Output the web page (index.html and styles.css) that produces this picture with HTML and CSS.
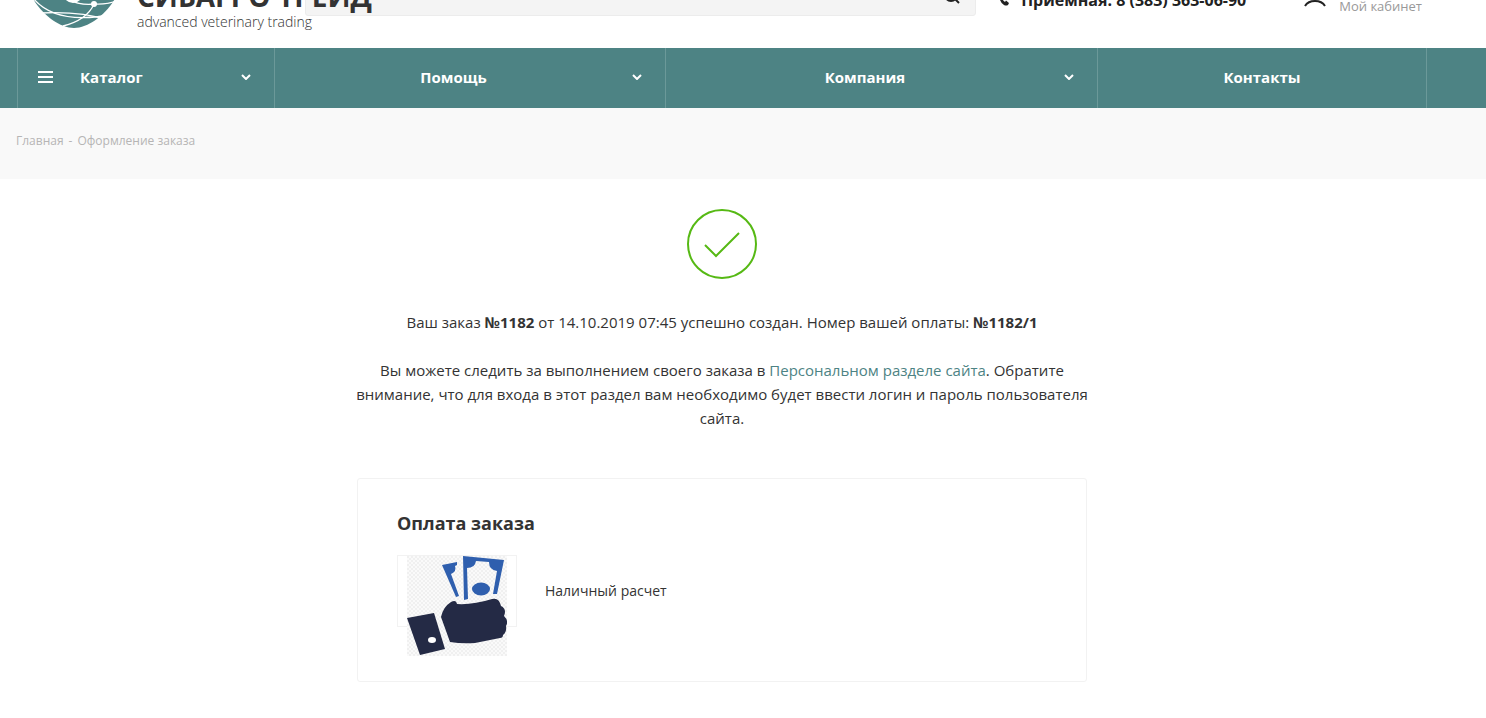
FILE: index.html
```html
<!DOCTYPE html>
<html lang="ru">
<head>
  <meta charset="UTF-8">
  <meta name="viewport" content="width=device-width, initial-scale=1.0">
  <title>Оформление заказа</title>
  <link rel="stylesheet" href="styles.css">
</head>
<body>

  <header class="header">
    <a href="#" class="logo">
      <svg class="logo-icon" width="100" height="100" viewBox="0 0 100 100" aria-hidden="true">
        <path d="M44 0C70 0 92 18 92 48C91 74 64 100 44 100C24 100 -3 74 -4 48C-4 18 18 0 44 0Z" fill="#4d8384"/>
        <g fill="none" stroke="#fff" stroke-width="1.3">
          <path d="M3 70Q26 98 84 86"/>
          <path d="M11 85Q50 83 78 92"/>
          <path d="M64 76Q57 92 33 98"/>
          <path d="M28 66Q45 78 64 76Q76 77 90 72"/>
        </g>
        <circle cx="43" cy="65" r="10" fill="#fff"/>
        <circle cx="43" cy="64" r="5" fill="#4d8384"/>
        <circle cx="64" cy="76" r="3" fill="#fff"/>
      </svg>
      <span class="logo-text">
        <span class="logo-name">СИБАГРО ТРЕЙД</span>
        <span class="logo-slogan">advanced veterinary trading</span>
      </span>
    </a>

    <form class="search" onsubmit="return false;">
      <input type="text" class="search-input" aria-label="Поиск">
      <button type="submit" class="search-button" aria-label="Найти">
        <svg width="18" height="18" viewBox="0 0 18 18" fill="none" stroke="#222" stroke-width="2">
          <circle cx="8" cy="8" r="6"/>
          <path d="M12 12L16 16"/>
        </svg>
      </button>
    </form>

    <a href="tel:83833630690" class="phone">
      <svg width="14" height="14" viewBox="0 0 14 14" aria-hidden="true">
        <path d="M3 1L5 0L7 4L5 5Q5 8 8 10L9 8.500L12 11L11 13Q9 14 7 13Q1 9 3 1Z" fill="#222"/>
      </svg>
      <span>Приемная: 8 (383) 363-06-90</span>
    </a>

    <a href="#" class="cabinet">
      <svg width="22" height="22" viewBox="0 0 22 22" fill="none" stroke="#222" stroke-width="2" aria-hidden="true">
        <circle cx="11" cy="7" r="5"/>
        <path d="M1 21Q4 16 11 16Q18 16 21 21"/>
      </svg>
      <span>Мой кабинет</span>
    </a>
  </header>

  <!-- Main menu -->
  <nav class="menu">
    <ul class="menu-list">
      <li class="menu-item">
        <a href="#" class="menu-link catalog">
          <svg width="15" height="12" viewBox="0 0 15 12" fill="#fff" aria-hidden="true">
            <path d="M0 0H15V2H0ZM0 5H15V7H0ZM0 10H15V12H0Z"/>
          </svg>
          <span>Каталог</span>
          <svg class="arrow" width="10" height="6" viewBox="0 0 10 6" aria-hidden="true"><path d="M1 1L5 5L9 1"/></svg>
        </a>
      </li>
      <li class="menu-item">
        <a href="#" class="menu-link">
          <span class="menu-title">Помощь</span>
          <svg class="arrow" width="10" height="6" viewBox="0 0 10 6" aria-hidden="true"><path d="M1 1L5 5L9 1"/></svg>
        </a>
      </li>
      <li class="menu-item">
        <a href="#" class="menu-link">
          <span class="menu-title">Компания</span>
          <svg class="arrow" width="10" height="6" viewBox="0 0 10 6" aria-hidden="true"><path d="M1 1L5 5L9 1"/></svg>
        </a>
      </li>
      <li class="menu-item">
        <a href="#" class="menu-link single">
          <span class="menu-title">Контакты</span>
        </a>
      </li>
    </ul>
  </nav>

  <!-- Breadcrumbs -->
  <div class="breadcrumbs">
    <a href="#">Главная</a>
    <span>-</span>
    <span>Оформление заказа</span>
  </div>

  <main class="content">
    <div class="order">
      <svg class="order-check" width="70" height="70" viewBox="0 0 70 70" fill="none" stroke="#56b914" stroke-width="2" aria-hidden="true">
        <circle cx="35" cy="35" r="34"/>
        <path d="M18 36L29 47L52 24"/>
      </svg>

      <p>Ваш заказ <b>№1182</b> от 14.10.2019 07:45 успешно создан. Номер вашей оплаты: <b>№1182/1</b></p>
      <p>Вы можете следить за выполнением своего заказа в <a href="#">Персональном разделе сайта</a>. Обратите внимание, что для входа в этот раздел вам необходимо будет ввести логин и пароль пользователя сайта.</p>

      <section class="payment">
        <h3>Оплата заказа</h3>
        <div class="payment-row">
          <div class="payment-logo">
            <svg width="100" height="100" viewBox="0 0 100 100" aria-hidden="true">
              <defs>
                <pattern id="checks" width="4" height="4" patternUnits="userSpaceOnUse">
                  <rect width="4" height="4" fill="#fafafa"/>
                  <rect width="2" height="2" fill="#f0f0f0"/>
                  <rect x="2" y="2" width="2" height="2" fill="#f0f0f0"/>
                </pattern>
              </defs>
              <rect width="100" height="100" fill="url(#checks)"/>
              <g fill="#2f5fae">
                <path d="M35 9L50 6L50 9L48 10Q50 15 44 18L52 40L49 41Z"/>
                <path fill-rule="evenodd" d="M56 0L97 4L90 38L86 38L90 15Q82 14 82 6L69 5Q68 12 60 12L61 43L57 44Z"/>
                <ellipse cx="74" cy="33" rx="9" ry="6.500"/>
              </g>
              <g fill="#242a45">
                <path d="M0 62L27 57L38 93L13 99Z"/>
                <path d="M34 61Q36 51 44 46Q49 43 50 48Q66 49 85 43Q92 41 94 50Q100 53 97 60Q102 65 99 70Q100 76 96 79Q96 82 93 82L68 87Q55 88 43 86Z"/>
              </g>
              <ellipse cx="25" cy="84" rx="4" ry="3" fill="#fff"/>
            </svg>
          </div>
          <div class="payment-name">Наличный расчет</div>
        </div>
      </section>
    </div>
  </main>

</body>
</html>
```
FILE: styles.css
```css
* {
  box-sizing: border-box;
}

body {
  margin: 0;
  font-family: "Open Sans", Arial, sans-serif;
  font-size: 15px;
  line-height: 24px;
  color: #333;
  background-color: #fff;
}

a {
  color: #4d8384;
  text-decoration: none;
}

/* Header */
.header {
  display: flex;
  align-items: flex-end;
  height: 48px;
  padding: 0 64px 0 30px;
  overflow: hidden;
}

.logo {
  display: flex;
  align-items: flex-end;
  flex: 0 0 275px;
  min-width: 0;
  padding-bottom: 16px;
  color: #333;
  z-index: 1;
}

.logo-icon {
  flex: none;
  margin-bottom: 4px;
}

.logo-text {
  display: flex;
  flex-direction: column;
  margin-left: 7px;
  white-space: nowrap;
}

.logo-name {
  font-size: 28px;
  font-weight: 700;
  line-height: 32px;
}

.logo-slogan {
  font-size: 14px;
  font-weight: 300;
  line-height: 20px;
}

.search {
  display: flex;
  flex: 1;
  margin-bottom: 32px;
  height: 40px;
  background-color: #f4f4f4;
  border: 1px solid #ececec;
  border-radius: 3px;
}

.search-input {
  flex: 1;
  min-width: 0;
  border: none;
  background: transparent;
}

.search-button {
  width: 46px;
  padding: 2px 0 0;
  border: none;
  background: transparent;
}

.phone {
  display: flex;
  align-items: flex-end;
  gap: 10px;
  margin: 0 58px 38px 21px;
  font-size: 16px;
  font-weight: 700;
  line-height: 20px;
  color: #222;
  white-space: nowrap;
}

.phone svg {
  margin-bottom: 4px;
}

.cabinet {
  display: flex;
  align-items: flex-end;
  gap: 13px;
  padding-bottom: 32px;
  font-size: 13px;
  line-height: 20px;
  color: #999;
  white-space: nowrap;
}

.cabinet svg {
  margin-bottom: 9px;
}

/* Main menu */
.menu {
  padding: 0 59px 0 17px;
  background-color: #4d8384;
}

.menu-list {
  display: grid;
  grid-template-columns: 257fr 391fr 432fr 329fr;
  margin: 0;
  padding: 0;
  list-style: none;
  border-left: 1px solid #6b9999;
}

.menu-item {
  border-right: 1px solid #6b9999;
}

.menu-link {
  display: flex;
  align-items: center;
  height: 60px;
  padding: 0 23px 2px 0;
  font-weight: 700;
  color: #fff;
}

.menu-title {
  flex: 1;
  text-align: center;
}

.single {
  padding-right: 0;
}

.catalog {
  padding-left: 20px;
  gap: 27px;
}

.arrow {
  margin-left: auto;
  fill: none;
  stroke: #fff;
  stroke-width: 2;
}

/* Breadcrumbs */
.breadcrumbs {
  display: flex;
  gap: 5px;
  padding: 21px 16px 26px;
  font-size: 12px;
  color: #b6b5b5;
  background-color: #f9f9f9;
}

.breadcrumbs a {
  color: #b6b5b5;
}

/* Order */
.content {
  padding: 30px 58px 36px 16px;
}

.order {
  max-width: 732px;
  margin: 0 auto;
  text-align: center;
}

.order-check {
  display: block;
  margin: 0 auto 31px;
}

.order p {
  margin: 0 0 24px;
}

.payment {
  margin: 48px 1px 0;
  padding: 32px 39px 25px;
  border: 1px solid #f2f2f2;
  border-radius: 3px;
  text-align: left;
}

.payment h3 {
  margin: 0 0 20px;
  font-size: 18px;
  line-height: 24px;
}

.payment-row {
  display: flex;
  gap: 28px;
}

.payment-logo {
  width: 120px;
  height: 72px;
  margin-bottom: 29px;
  padding-left: 9px;
  border: 1px solid #f2f2f2;
}

.payment-name {
  font-size: 14px;
  line-height: 72px;
}
```
